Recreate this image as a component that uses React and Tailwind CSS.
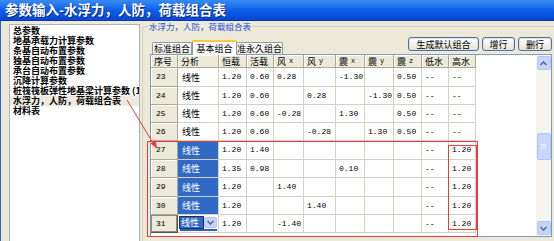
import React from 'react'

const cols = [
  { w: 'w-[27px]', label: '序号' },
  { w: 'w-[41px]', label: '分析' },
  { w: 'w-[28px]', label: '恒载' },
  { w: 'w-[27px]', label: '活载' },
  { w: 'w-[30px]', label: '风', sub: 'x' },
  { w: 'w-[32px]', label: '风', sub: 'y' },
  { w: 'w-[29px]', label: '震', sub: 'x' },
  { w: 'w-[29px]', label: '震', sub: 'y' },
  { w: 'w-[28px]', label: '震', sub: 'z' },
  { w: 'w-[27px]', label: '低水' },
  { w: 'w-[27px]', label: '高水' },
]

const rows = [
  { n: 23, h: 'h-[19px]', v: ['1.20', '0.60', '0.28', '', '-1.30', '', '0.50', '--', '--'] },
  { n: 24, h: 'h-[18px]', v: ['1.20', '0.60', '', '0.28', '', '-1.30', '0.50', '--', '--'] },
  { n: 25, h: 'h-[18px]', v: ['1.20', '0.60', '-0.28', '', '1.30', '', '0.50', '--', '--'] },
  { n: 26, h: 'h-[18px]', v: ['1.20', '0.60', '', '-0.28', '', '1.30', '0.50', '--', '--'] },
  { n: 27, h: 'h-[19px]', sel: true, v: ['1.20', '1.40', '', '', '', '', '', '--', '1.20'] },
  { n: 28, h: 'h-[18px]', sel: true, v: ['1.35', '0.98', '', '', '0.10', '', '', '--', '1.20'] },
  { n: 29, h: 'h-[19px]', sel: true, v: ['1.20', '', '1.40', '', '', '', '', '--', '1.20'] },
  { n: 30, h: 'h-[18px]', sel: true, v: ['1.20', '', '', '1.40', '', '', '', '--', '1.20'] },
  { n: 31, h: 'h-[18px]', edit: true, v: ['1.20', '', '-1.40', '', '', '', '', '--', '1.20'] },
]

const items = [
  '总参数',
  '地基承载力计算参数',
  '条基自动布置参数',
  '独基自动布置参数',
  '承台自动布置参数',
  '沉降计算参数',
  '桩筏筏板弹性地基梁计算参数 (1)',
  '水浮力，人防，荷载组合表',
  '材料表',
]

const cjk = "font-['Noto_Sans_CJK_SC',sans-serif]"
const mono = "font-['Liberation_Mono',monospace]"

const Chevron = ({ up }) => (
  <svg width="7" height="5" viewBox="0 0 7 5">
    <path d={up ? 'M0.5 4 L3.5 1 L6.5 4' : 'M0.5 1 L3.5 4 L6.5 1'} fill="none" stroke="#4d6185" strokeWidth="1.4" />
  </svg>
)

const XpButton = ({ children, w }) => (
  <button className={`${w} h-[14px] rounded-[3px] border border-[#5a6f94] bg-linear-to-b from-white to-[#e6e3d6] shadow-[inset_0_0_0_1px_#d6e0f5] text-[9px] leading-none text-black ${cjk}`}>
    {children}
  </button>
)

const HeaderCell = ({ col }) => (
  <div className={`${col.w} h-[13px] shrink-0 flex items-center pl-[3px] bg-[#ece9d8] border-r border-b border-[#aca899] shadow-[inset_1px_1px_0_#fff] text-[9px] leading-none ${cjk}`}>
    {col.label}
    {col.sub && <span className={`${mono} text-[7px] ml-[3px]`}>{col.sub}</span>}
  </div>
)

const Row = ({ r }) => (
  <div className={`flex ${r.h}`}>
    <div className={`w-[27px] shrink-0 flex items-center pl-[5px] bg-[#ece9d8] border-r border-b ${r.edit ? 'border-[#555] shadow-[inset_0_0_0_1px_#8a8a80]' : 'border-[#aca899] shadow-[inset_1px_1px_0_#fff]'} text-[8px] ${mono}`}>
      {r.n}
    </div>
    {r.edit ? (
      <div className="w-[41px] shrink-0 flex flex-col justify-center pl-[2px] pr-[1px] border-r border-b border-[#d3d0c4] bg-white">
        <div className="flex items-center h-[12px]">
          <div className={`w-[23px] h-[11px] flex items-center pl-[1px] bg-[#316ac5] text-white text-[9px] leading-none outline outline-[#1c2f55] ${cjk}`}>线性</div>
          <div className="ml-auto w-[13px] h-[11px] rounded-[2px] bg-[#c3d5fd] border border-[#b3c7f2] flex items-center justify-center">
            <Chevron />
          </div>
        </div>
        <div className="h-[2px] bg-[#2f5fc8] mt-[1px]" />
      </div>
    ) : (
      <div className={`w-[41px] shrink-0 flex items-center pl-[4px] border-r border-b border-[#d3d0c4] text-[9px] leading-none ${cjk} ${r.sel ? 'bg-[#316ac5] text-white' : 'bg-white'}`}>
        线性
      </div>
    )}
    {r.v.map((val, i) => (
      <div key={i} className={`${cols[i + 2].w} shrink-0 flex items-center pl-[3px] border-r border-b border-[#d3d0c4] bg-white text-[8px] whitespace-nowrap ${mono}`}>
        {val}
      </div>
    ))}
  </div>
)

const App = () => {
  return (
    <div className={`relative w-[554px] h-[241px] overflow-hidden bg-[#ece9d8] flex flex-col ${cjk}`}>
      <div className="h-[21px] shrink-0 flex items-center pl-[5px] bg-linear-to-b from-[#3a8af4] via-[#0b5fe8] to-[#0846d2] border-b border-[#0735a8]">
        <span className="text-white text-[13.5px] font-bold leading-none [text-shadow:1px_1px_0_#0a2a80] whitespace-nowrap">参数输入-水浮力，人防，荷载组合表</span>
      </div>

      <div className="flex flex-1 border-l border-[#2a62e0]">
        <div className="pl-[8px] pt-[3px] shrink-0">
          <div className="w-[131px] h-[230px] bg-white border border-[#a7b4c6] overflow-hidden pt-[1px]">
            {items.map((t, i) => (
              <div key={t} className={`h-[10px] leading-[10px] px-[3px] text-[9px] font-bold whitespace-nowrap ${i === 7 ? 'bg-[#eceadd]' : ''}`}>
                {t}
              </div>
            ))}
          </div>
        </div>

        <div className="ml-[2px] flex-1 relative mt-[5px] border-t border-l border-[#d0d0bf] rounded-tl-[3px] flex flex-col">
          <span className="absolute -top-[6px] left-[5px] px-[1px] bg-[#ece9d8] text-[#1c4fd4] text-[8.5px] leading-[10px] whitespace-nowrap">水浮力，人防，荷载组合表</span>

          <div className="flex items-end justify-between h-[27px] pl-[9px] pr-[2px]">
            <div className="flex items-end">
              <div className="w-[40px] h-[12px] flex items-center justify-center rounded-t-[2px] border border-b-0 border-[#919b9c] bg-linear-to-b from-white to-[#ecebe5] text-[9px] leading-none">标准组合</div>
              <div className="w-[45px] h-[15px] flex items-center justify-center rounded-t-[2px] border border-b-0 border-[#919b9c] border-t-2 border-t-[#ffc83c] bg-[#fcfcfe] text-[9px] leading-none -mb-[1px] relative z-10">基本组合</div>
              <div className="w-[46px] h-[12px] flex items-center justify-center rounded-t-[2px] border border-b-0 border-l-0 border-[#919b9c] bg-linear-to-b from-white to-[#ecebe5] text-[9px] leading-none">准永久组合</div>
            </div>
            <div className="flex gap-[3px] mb-[3px]">
              <XpButton w="w-[71px]">生成默认组合</XpButton>
              <XpButton w="w-[33px]">增行</XpButton>
              <XpButton w="w-[34px]">删行</XpButton>
            </div>
          </div>

          <div className="ml-[7px] w-[402px] h-[183px] border border-[#7f9db9] bg-white flex">
            <div className="w-[385px] flex flex-col">
              <div className="flex">
                {cols.map((c, i) => <HeaderCell key={i} col={c} />)}
              </div>
              {rows.map(r => <Row key={r.n} r={r} />)}
            </div>
            <div className="w-[15px] bg-[#f5f4ef] flex flex-col items-center py-[1px]">
              <div className="w-[14px] h-[14px] rounded-[2px] bg-[#c3d5fd] border border-[#b3c7f2] flex items-center justify-center">
                <Chevron up />
              </div>
              <div className="flex-1 w-full flex flex-col items-center pt-[63px]">
                <div className="w-[14px] h-[27px] rounded-[2px] bg-[#c6d7fb] border border-[#b1c5f0] flex flex-col items-center justify-center gap-[1px]">
                  <div className="w-[5px] h-[1px] bg-[#eef3ff]" />
                  <div className="w-[5px] h-[1px] bg-[#eef3ff]" />
                  <div className="w-[5px] h-[1px] bg-[#eef3ff]" />
                </div>
              </div>
              <div className="w-[14px] h-[14px] rounded-[2px] bg-[#c3d5fd] border border-[#b3c7f2] flex items-center justify-center">
                <Chevron />
              </div>
            </div>
          </div>
        </div>
      </div>

      <div className="absolute left-[147px] top-[141px] w-[331px] h-[96px] border border-[#ee3b3b]" />
      <div className="absolute left-[448px] top-[145px] w-[29px] h-[85px] border border-[#ee3b3b]" />
      <svg className="absolute left-0 top-0 pointer-events-none" width="554" height="241">
        <line x1="127" y1="100" x2="153" y2="143" stroke="#ee3b3b" strokeWidth="1" />
        <path d="M157.5 149 L150.5 143.5 L155.5 140.5 Z" fill="#ee3b3b" />
      </svg>
    </div>
  )
}

export default App
